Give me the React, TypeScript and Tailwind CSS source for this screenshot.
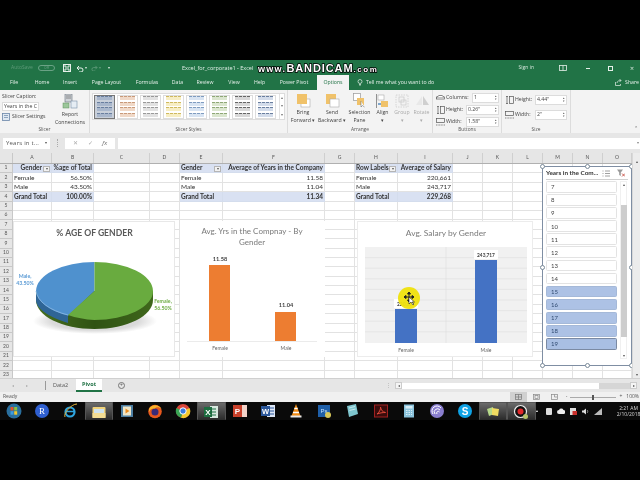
import React from "react";

const COLS = ["A","B","C","D","E","F","G","H","I","J","K","L","M","N","O"];
const cells: Record<string, [string, string?]> = {
  A1:["Gender","r"],B1:["%age of Total","r"],A2:["Female"],B2:["56.50%","r"],A3:["Male"],B3:["43.50%","r"],A4:["Grand Total"],B4:["100.00%","r"],
  E1:["Gender"],F1:["Average of Years in the Company","r"],E2:["Female"],F2:["11.58","r"],E3:["Male"],F3:["11.04","r"],E4:["Grand Total"],F4:["11.34","r"],
  H1:["Row Labels"],I1:["Average of Salary","r"],H2:["Female"],I2:["220,661","r"],H3:["Male"],I3:["243,717","r"],H4:["Grand Total"],I4:["229,268","r"],
};
const FILTER = new Set(["A1","E1","H1"]);
const PIVOT = new Set(["A","B","E","F","H","I"]);
const GRID = "grid grid-cols-[13px_39px_42px_56px_30px_43px_102px_30px_43px_55px_30px_30px_30px_30px_30px_29px]";

function Drop() {
  return (
    <span className="absolute right-[1px] top-[1.5px] flex h-[6px] w-[7px] items-center justify-center border border-[#b5b5b5] bg-[#f2f2f2]">
      <span className="h-0 w-0 border-x-[1.5px] border-t-[2px] border-x-transparent border-t-[#555]" />
    </span>
  );
}

function Sheet() {
  const rows = Array.from({ length: 23 }, (_, i) => i + 1);
  return (
    <div className="relative flex h-[225px] flex-col overflow-hidden bg-white">
      <div className={`${GRID} h-[11px] shrink-0 border-b border-[#b0b0b0] bg-[#e6e6e6] text-[#555]`}>
        <div className="border-r border-[#c8c8c8]" />
        {COLS.map((c) => (
          <div key={c} className="flex items-center justify-center border-r border-[#cfcfcf] text-[5px]">{c}</div>
        ))}
      </div>
      <div className={`${GRID} auto-rows-[9.4px]`}>
        {rows.map((r) => (
          <React.Fragment key={r}>
            <div className="flex items-center justify-center border-b border-r border-[#c8c8c8] bg-[#e6e6e6] text-[5px] text-[#555]">{r}</div>
            {COLS.map((c) => {
              const id = `${c}${r}`;
              const v = cells[id];
              const band = PIVOT.has(c) && (r === 1 || r === 4);
              return (
                <div
                  key={id}
                  className={`relative flex items-center overflow-visible whitespace-nowrap border-b border-r px-[1px] text-[6.5px] text-[#333] ${
                    band ? "border-[#d4dded] bg-[#d9e1f2] font-bold" : "border-[#e2e2e2]"
                  } ${v && v[1] === "r" ? "justify-end" : "justify-start"} ${id === "A1" ? "pr-[9px]" : ""}`}
                >
                  {v ? v[0] : ""}
                  {FILTER.has(id) && <Drop />}
                </div>
              );
            })}
          </React.Fragment>
        ))}
      </div>
      <PieChart />
      <BarChart />
      <SalaryChart />
      <Slicer />
      <div className="absolute left-[398px] top-[134px] h-[22px] w-[22px] rounded-full bg-[#efe20c] opacity-95" />
      <svg className="absolute left-[402px] top-[138px]" width="15" height="15" viewBox="0 0 15 15">
        <path d="M7 1v10M2 6h10M7 1 5.500 3h3zM7 11l-1.500-2h3zM2 6l2-1.500v3zM12 6l-2-1.500v3z" stroke="#222" strokeWidth="1" fill="#222" />
        <path d="M7 6v7l2-2 2 3 1-1-2-2h2.500z" fill="#fff" stroke="#222" strokeWidth=".6" />
      </svg>
    </div>
  );
}

function PieChart() {
  return (
    <div className="absolute left-[13px] top-[68px] h-[136px] w-[162px] border border-[#e8e8e8] bg-white">
      <svg width="162" height="136" viewBox="13 221 162 136" fontFamily="Lato, 'Open Sans', sans-serif">
        <defs>
          <linearGradient id="gs" x1="0" x2="1" y1="0" y2="0">
            <stop offset="0" stopColor="#48701f" />
            <stop offset=".5" stopColor="#2f5213" />
            <stop offset="1" stopColor="#3f671c" />
          </linearGradient>
          <radialGradient id="sh">
            <stop offset=".7" stopColor="#bbb" />
            <stop offset="1" stopColor="#fff" />
          </radialGradient>
        </defs>
        <ellipse cx="94" cy="320" rx="62" ry="13" fill="url(#sh)" opacity=".55" />
        <path d="M35 290v9c0 16 26 29 58.500 29s58.500-13 58.500-29v-9z" fill="url(#gs)" />
        <path d="M35 290v9c0 8 12 17 32 23v-9C47 307 35 298 35 290z" fill="#2f6596" />
        <path d="M35 290a58.500 29 0 0 0 32 24.500l.5 0L93.500 290V261a58.500 29 0 0 0-58.500 29z" fill="#4f91ce" />
        <path d="M93.500 261a58.500 29 0 0 1 0 58 58 29 0 0 1-26.500-5L93.500 290z" fill="#69ab3f" />
        <path d="M35 290a58.500 29 0 0 0 32 24" fill="none" stroke="#8fbbe6" strokeWidth=".8" />
        <text x="93.500" y="235" textAnchor="middle" fontSize="8.600" fontWeight="700" fill="#595959">% AGE OF GENDER</text>
        <text x="24" y="277" textAnchor="middle" fontSize="5.200" fontWeight="700" fill="#5b9bd5">Male,</text>
        <text x="24" y="284" textAnchor="middle" fontSize="5.200" fontWeight="700" fill="#5b9bd5">43.50%</text>
        <text x="162" y="302" textAnchor="middle" fontSize="5.200" fontWeight="700" fill="#70ad47">Female,</text>
        <text x="162" y="309" textAnchor="middle" fontSize="5.200" fontWeight="700" fill="#70ad47">56.50%</text>
      </svg>
    </div>
  );
}

function BarChart() {
  return (
    <div className="absolute left-[180px] top-[68px] h-[136px] w-[145px] bg-white">
      <svg width="145" height="136" viewBox="180 221 145 136" fontFamily="Lato, 'Open Sans', sans-serif">
        <text x="252" y="234" textAnchor="middle" fontSize="8" fill="#7a7a7a">Avg. Yrs in the Compnay - By</text>
        <text x="252" y="245" textAnchor="middle" fontSize="8" fill="#7a7a7a">Gender</text>
        <rect x="209" y="265" width="21" height="76" fill="#ed7d31" />
        <rect x="275" y="312" width="21" height="29" fill="#ed7d31" />
        <path d="M187 341.500h130" stroke="#e2e2e2" strokeWidth=".7" />
        <text x="220" y="261" textAnchor="middle" fontSize="5.600" fontWeight="700" fill="#404040">11.58</text>
        <text x="286" y="307" textAnchor="middle" fontSize="5.600" fontWeight="700" fill="#404040">11.04</text>
        <text x="220" y="350" textAnchor="middle" fontSize="5" fill="#666">Female</text>
        <text x="286" y="350" textAnchor="middle" fontSize="5" fill="#666">Male</text>
      </svg>
    </div>
  );
}

function SalaryChart() {
  const lines = [256.6, 267.2, 277.8, 288.4, 299, 309.6, 320.2, 330.8];
  return (
    <div className="absolute left-[357px] top-[68px] h-[136px] w-[176px] border border-[#ececec] bg-white">
      <svg width="176" height="136" viewBox="357 221 176 136" fontFamily="Lato, 'Open Sans', sans-serif">
        <text x="445" y="235" textAnchor="middle" fontSize="8.400" fill="#7a7a7a">Avg. Salary by Gender</text>
        <rect x="364" y="246" width="162" height="96" fill="#f1f1f1" />
        {lines.map((y) => <path key={y} d={`M364 ${y}h162`} stroke="#dedede" strokeWidth=".6" />)}
        <path d="M445 246v96" stroke="#dedede" strokeWidth=".6" />
        <rect x="394" y="308" width="22" height="34" fill="#4472c4" />
        <rect x="474" y="259" width="22" height="83" fill="#4472c4" />
        <rect x="393" y="298" width="24" height="9" fill="#fff" />
        <rect x="473" y="249" width="24" height="9" fill="#fff" />
        <text x="405" y="304.500" textAnchor="middle" fontSize="4.800" fontWeight="700" fill="#404040">220,661</text>
        <text x="485" y="255.500" textAnchor="middle" fontSize="4.800" fontWeight="700" fill="#404040">243,717</text>
        <text x="405" y="351" textAnchor="middle" fontSize="5" fill="#666">Female</text>
        <text x="485" y="351" textAnchor="middle" fontSize="5" fill="#666">Male</text>
      </svg>
    </div>
  );
}

function Handle({ c }: { c: string }) {
  return <span className={`absolute h-[5px] w-[5px] rounded-full border border-[#7a8a99] bg-white ${c}`} />;
}

function Slicer() {
  const items = [7,8,9,10,11,12,13,14,15,16,17,18,19];
  return (
    <div className="absolute left-[542px] top-[13px] flex h-[200px] w-[90px] flex-col border border-[#7f8ea3] bg-white">
      <Handle c="left-[-3px] top-[-3px]" /><Handle c="left-[42px] top-[-3px]" /><Handle c="right-[-3px] top-[-3px]" />
      <Handle c="left-[-3px] top-[98px]" /><Handle c="right-[-3px] top-[98px]" />
      <Handle c="left-[-3px] bottom-[-3px]" /><Handle c="left-[42px] bottom-[-3px]" /><Handle c="right-[-3px] bottom-[-3px]" />
      <div className="mx-[3px] flex h-[13px] shrink-0 items-center justify-between border-b border-[#d0d0d0] pr-[3px]">
        <span className="whitespace-nowrap text-[6.400px] font-bold text-[#333]">Years in the Com...</span>
        <span className="flex items-center gap-[7px]">
          <svg width="8" height="7" viewBox="0 0 8 7" stroke="#888" strokeWidth=".8"><path d="M3 1h5M3 3.500h5M3 6h5M.5 1h1M.5 3.500h1M.5 6h1" /></svg>
          <svg width="8" height="8" viewBox="0 0 8 8"><path d="M0 .5h6L3.800 3.500V7L2.200 6V3.500z" fill="#999" /><path d="M5 4.500l3 3M8 4.500l-3 3" stroke="#c0392b" strokeWidth=".8" /></svg>
        </span>
      </div>
      <div className="flex flex-1 gap-[3px] pl-[3px] pt-[1px]">
        <div className="flex w-[71px] flex-col gap-[1.5px]">
          {items.map((n) => (
            <div
              key={n}
              className={`flex h-[11.6px] shrink-0 items-center rounded-[1.500px] border pl-[4px] text-[6px] ${
                n === 19 ? "border-[#7b8aa3] bg-[#a9bfe3] text-[#2f4a70]" : n >= 15 ? "border-[#a5b9d8] bg-[#adc2e5] text-[#2f4a70]" : "border-[#e3e3e3] bg-white text-[#444]"
              }`}
            >
              {n}
            </div>
          ))}
        </div>
        <div className="flex h-[178px] w-[7px] flex-col items-center justify-between border border-[#f0f0f0]">
          <span className="mt-[2px] h-0 w-0 border-x-[1.5px] border-b-[2px] border-x-transparent border-b-[#555]" />
          <div className="h-[132px] w-[6px] bg-[#cdcdcd]" />
          <span className="mb-[1px] h-0 w-0 border-x-[1.5px] border-t-[2px] border-x-transparent border-t-[#555]" />
        </div>
      </div>
    </div>
  );
}

function Gallery() {
  const sw = [
    "border-[#6a7f9f] bg-[#a9b7cc]",
    "border-[#c99a7a] bg-[#f0d9c8]",
    "border-[#9a9a9a] bg-[#e2e2e2]",
    "border-[#cfb95f] bg-[#f7eec4]",
    "border-[#7f9cc0] bg-[#d8e4f2]",
    "border-[#8fa877] bg-[#dbe6cf]",
    "border-[#666666] bg-[#d8d8d8]",
    "border-[#6a7f9f] bg-[#d3dcea]",
  ];
  return (
    <div className="mx-[2px] mt-[3px] flex h-[27px] items-center gap-[2.500px] border border-[#dcdcdc] bg-white pl-[1px]">
      {sw.map((cls, i) => (
        <div key={i} className={`flex h-[24px] w-[20.500px] shrink-0 flex-col justify-center gap-[1.500px] border px-[1.500px] ${i === 0 ? "border-[#777] bg-[#c9d0da]" : "border-[#ddd]"}`}>
          {[0,1,2,3].map((k) => (
            <div key={k} className={`h-[4px] border-t border-dashed ${cls}`} />
          ))}
        </div>
      ))}
      <div className="ml-[1px] flex h-full w-[6px] flex-col items-center justify-around border-l border-[#e2e2e2] text-[4px] text-[#777]">
        <span>▴</span><span>▾</span><span>▾</span>
      </div>
    </div>
  );
}

function RibbonBtn({ label, label2, icon, off, w }: { label: string; label2: string; icon: React.ReactNode; off?: boolean; w: string }) {
  return (
    <div className={`flex ${w} flex-col items-center text-center leading-[7.500px] ${off ? "text-[#aaa]" : "text-[#444]"}`}>
      <div className="flex h-[17px] items-center">{icon}</div>
      <span className="whitespace-nowrap">{label}</span>
      <span className="whitespace-nowrap">{label2}</span>
    </div>
  );
}

function Group({ name, w, children }: { name: string; w: string; children: React.ReactNode }) {
  return (
    <div className={`relative ${w} h-full shrink-0 border-r border-[#dcdcdc]`}>
      {children}
      <div className="absolute bottom-[0px] left-0 right-0 text-center text-[4.800px] leading-[7px] text-[#555]">{name}</div>
    </div>
  );
}

function SizeRow({ label, val, icon, w, box }: { label: string; val: string; icon: React.ReactNode; w: string; box: string }) {
  return (
    <div className="flex h-[12px] items-center gap-[1px]">
      <span className="flex w-[9px] justify-center">{icon}</span>
      <span className={`${w} whitespace-nowrap`}>{label}</span>
      <span className={`flex h-[10px] ${box} items-center justify-between border border-[#dcdcdc] bg-white pl-[1px] pr-[1px]`}>
        {val}
        <span className="flex flex-col text-[3px] leading-[3px] text-[#555]"><span>▴</span><span>▾</span></span>
      </span>
    </div>
  );
}

const HIco = <svg width="8" height="8" viewBox="0 0 8 8" stroke="#555" strokeWidth=".7" fill="none"><path d="M1 0v8M.2 1 1 0l.8 1M.2 7l.8 1 .8-1" /><rect x="3.500" y=".5" width="4" height="7" /></svg>;
const WIco = <svg width="9" height="8" viewBox="0 0 9 8" stroke="#555" strokeWidth=".7" fill="none"><rect x=".5" y=".5" width="8" height="4" /><path d="M0 7h9" strokeDasharray="1 .6" /></svg>;
const CIco = <svg width="9" height="7" viewBox="0 0 9 7" stroke="#555" strokeWidth=".7" fill="#fff"><rect x=".5" y="2" width="8" height="2" /><path d="M1 2 3 .5h3L8 2" /></svg>;

function Ribbon() {
  return (
    <div className="flex h-[43px] shrink-0 bg-[#f3f3f3] text-[5.200px] text-[#444]">
      <Group name="Slicer" w="w-[90px]">
        <div className="flex h-full">
          <div className="flex w-[51px] flex-col pl-[2px] pt-[3px]">
            <span className="leading-[7px]">Slicer Caption:</span>
            <span className="mt-[2px] flex h-[9px] w-[37px] items-center whitespace-nowrap border border-[#dcdcdc] bg-white pl-[1px]">Years in the C</span>
            <span className="mt-[2px] flex items-center gap-[2px] whitespace-nowrap">
              <svg width="8" height="8" viewBox="0 0 8 8"><rect x=".5" y=".5" width="7" height="7" fill="#dfe8f2" stroke="#6a86a8" strokeWidth=".8" /><path d="M2 2.500h4M2 4.500h4" stroke="#6a86a8" strokeWidth=".7" /></svg>
              Slicer Settings
            </span>
          </div>
          <div className="flex flex-1 flex-col items-center pt-[4px] text-center leading-[7.500px]">
            <svg width="16" height="15" viewBox="0 0 16 15"><rect x="3" y="0" width="7" height="8" fill="#cfd3d8" stroke="#67707a" strokeWidth=".6" /><path d="M4 2h5M4 4h5" stroke="#555" strokeWidth=".6" /><rect x="1" y="9" width="6" height="5" fill="#9cc79a" stroke="#5e8f5c" strokeWidth=".5" /><rect x="9" y="7" width="6" height="7" fill="#e6edf4" stroke="#7a90a8" strokeWidth=".6" /></svg>
            <span className="mt-[2px]">Report</span>
            <span>Connections</span>
          </div>
        </div>
      </Group>
      <Group name="Slicer Styles" w="w-[198px]"><Gallery /></Group>
      <Group name="Arrange" w="w-[145px]">
        <div className="flex pt-[2px]">
          <RibbonBtn w="w-[30px]" label="Bring" label2="Forward ▾" icon={<svg width="15" height="15" viewBox="0 0 15 15"><rect x="5" y="6" width="9" height="8" fill="#fff" stroke="#aaa" strokeWidth=".6" /><rect x="1" y="1" width="10" height="10" fill="#f0c26a" /></svg>} />
          <RibbonBtn w="w-[28px]" label="Send" label2="Backward ▾" icon={<svg width="15" height="15" viewBox="0 0 15 15"><rect x="1" y="1" width="10" height="10" fill="#f0c26a" /><rect x="5" y="6" width="9" height="8" fill="#fff" stroke="#aaa" strokeWidth=".6" /></svg>} />
          <RibbonBtn w="w-[27px]" label="Selection" label2="Pane" icon={<svg width="14" height="15" viewBox="0 0 14 15"><rect x=".5" y=".5" width="7" height="7" fill="#fff" stroke="#999" strokeWidth=".7" /><rect x="4" y="5" width="7" height="7" fill="#f0c26a" /><path d="M8 8v6l1.500-1.500 2 1.500" fill="#fff" stroke="#555" strokeWidth=".5" /></svg>} />
          <RibbonBtn w="w-[19px]" label="Align" label2="▾" icon={<svg width="13" height="14" viewBox="0 0 13 14"><path d="M.5 0v14" stroke="#777" strokeWidth=".8" /><rect x="2" y="1" width="6" height="5" fill="#fff" stroke="#aaa" strokeWidth=".6" /><rect x="5" y="7" width="7" height="6" fill="#f0c26a" /><path d="M2 10h3" stroke="#2f75b5" strokeWidth="1.200" /></svg>} />
          <RibbonBtn w="w-[20px]" off label="Group" label2="▾" icon={<svg width="14" height="14" viewBox="0 0 14 14" fill="none" stroke="#c8c8c8" strokeWidth=".7"><rect x="1" y="1" width="12" height="12" strokeDasharray="1.500 1" /><rect x="4" y="3" width="5" height="5" /><rect x="6" y="6" width="5" height="5" /></svg>} />
          <RibbonBtn w="w-[19px]" off label="Rotate" label2="▾" icon={<svg width="14" height="13" viewBox="0 0 14 13"><path d="M7 11V2L1 11z" fill="#e8e8e8" /><path d="M8 11V2l6 9z" fill="#cfcfcf" /></svg>} />
        </div>
      </Group>
      <Group name="Buttons" w="w-[69px]">
        <div className="pl-[3px] pt-[2px]">
          <SizeRow label="Columns:" val="1" w="w-[25px]" box="w-[27px]" icon={CIco} />
          <SizeRow label="Height:" val="0.26&quot;" w="w-[19px]" box="w-[33px]" icon={HIco} />
          <SizeRow label="Width:" val="1.58&quot;" w="w-[19px]" box="w-[33px]" icon={WIco} />
        </div>
      </Group>
      <Group name="Size" w="w-[69px]">
        <div className="pl-[3px] pt-[4px]">
          <SizeRow label="Height:" val="4.44&quot;" w="w-[19px]" box="w-[32px]" icon={HIco} />
          <div className="h-[3px]" />
          <SizeRow label="Width:" val="2&quot;" w="w-[19px]" box="w-[32px]" icon={WIco} />
        </div>
      </Group>
      <div className="flex flex-1 items-end justify-end pb-[1px] pr-[2px] text-[5px] text-[#666]">⌃</div>
    </div>
  );
}

function Title() {
  return (
    <div className="relative flex h-[15px] shrink-0 items-center bg-[#217346] pt-[1px] text-[5px] text-[#d5e6dc]">
      <span className="ml-[11px] w-[27px] text-[#5f9a79]">AutoSave</span>
      <span className="flex h-[6px] w-[17px] items-center justify-center rounded-full border border-[#6aa285] text-[3.500px] text-[#6aa285]">Off</span>
      <svg className="ml-[8px]" width="8" height="8" viewBox="0 0 8 8" fill="none" stroke="#e6f0ea" strokeWidth="1"><rect x=".5" y=".5" width="7" height="7" /><path d="M2 .5v2.500h4V.5M2 7.500V5h4v2.500" /></svg>
      <svg className="ml-[5px]" width="8" height="7" viewBox="0 0 8 7" fill="none" stroke="#e6f0ea" strokeWidth="1"><path d="M1 3h4a2 2 0 0 1 0 4H3M3 1 1 3l2 2" /></svg>
      <span className="ml-[1px] text-[3.500px]">▾</span>
      <svg className="ml-[4px]" width="7" height="6" viewBox="0 0 8 7" fill="none" stroke="#5f9a79" strokeWidth="1"><path d="M7 3H3a2 2 0 0 0 0 4h2M5 1l2 2-2 2" /></svg>
      <span className="ml-[1px] text-[3.500px] text-[#5f9a79]">▾</span>
      <span className="ml-[7px] text-[4px]">▾</span>
      <span className="ml-[72px] whitespace-nowrap text-[5.500px] text-[#e2efe8]">Excel_for_corporate1 - Excel</span>
      <span className="ml-auto mr-[25px] whitespace-nowrap">Sign in</span>
      <svg className="mr-[19px]" width="8" height="6" viewBox="0 0 8 6" fill="none" stroke="#e6f0ea" strokeWidth=".8"><rect x=".5" y=".5" width="7" height="5" /><path d="M4 .5v5" /></svg>
      <span className="mr-[18px] h-px w-[4px] bg-[#e6f0ea]" />
      <span className="mr-[17px] h-[5px] w-[5px] border border-[#e6f0ea]" />
      <span className="mr-[6px] text-[7px] leading-none">×</span>
      <span className="absolute left-[258px] top-[0px] whitespace-nowrap font-bold text-white [font-family:'Liberation_Sans',sans-serif] [paint-order:stroke_fill] [-webkit-text-stroke:1.500px_#000]">
        <span className="text-[9px] tracking-[1.300px]">www.</span>
        <span className="text-[11px] tracking-[0.9px]">BANDICAM</span>
        <span className="text-[8px] tracking-[1.600px]">.com</span>
      </span>
    </div>
  );
}

function Tabs() {
  const tabs: [string, string][] = [
    ["File","w-[28px]"],["Home","w-[28px]"],["Insert","w-[28px]"],["Page Layout","w-[45px]"],["Formulas","w-[36px]"],["Data","w-[25px]"],
    ["Review","w-[30px]"],["View","w-[28px]"],["Help","w-[23px]"],["Power Pivot","w-[46px]"],
  ];
  return (
    <div className="flex h-[15px] shrink-0 items-center bg-[#217346] text-[5.200px] text-[#e6f0ea]">
      {tabs.map(([t, w]) => <span key={t} className={`${w} whitespace-nowrap text-center`}>{t}</span>)}
      <span className="flex h-full w-[32px] items-center justify-center bg-[#f3f3f3] text-[#217346]">Options</span>
      <svg className="ml-[8px]" width="6" height="7" viewBox="0 0 6 7" fill="none" stroke="#e6f0ea" strokeWidth=".7"><circle cx="3" cy="2.500" r="2" /><path d="M2 5.500h2M2.500 6.500h1" /></svg>
      <span className="ml-[3px] whitespace-nowrap">Tell me what you want to do</span>
      <svg className="ml-auto mr-[3px]" width="7" height="7" viewBox="0 0 7 7" fill="none" stroke="#e6f0ea" strokeWidth=".7"><path d="M.5 3v3.500h5V5M2 4c0-2 2-2.500 4-2.500M4.500 0 6 1.500 4.500 3" /></svg>
      <span className="mr-[1px]">Share</span>
    </div>
  );
}

function Formula() {
  return (
    <div className="flex h-[20px] shrink-0 items-center bg-[#e6e6e6] pb-[3px] pt-[3px] text-[6px] text-[#555]">
      <span className="ml-[3px] flex h-[11px] w-[47px] items-center justify-between bg-white px-[3px] tracking-[0.2px]">Years in t...<span className="text-[4px]">▾</span></span>
      <span className="mx-[7px] h-[8px] border-l border-dotted border-[#aaa]" />
      <span className="flex h-[11px] w-[50px] items-center justify-around bg-white px-[3px] text-[#aaa]">
        <span>✕</span><span>✓</span><span className="italic text-[#666]">fx</span>
      </span>
      <span className="ml-[3px] flex h-[11px] flex-1 items-center justify-end bg-white pr-[1px] text-[4px] text-[#888]">▾</span>
    </div>
  );
}

function Bottom() {
  return (
    <>
      <div className="flex h-[14px] shrink-0 items-center border-t border-[#d0d0d0] bg-[#e6e6e6] text-[5.500px] text-[#555]">
        <span className="ml-[12px] text-[4px] text-[#aaa]">◂</span>
        <span className="ml-[12px] text-[4px] text-[#aaa]">▸</span>
        <span className="ml-[17px] h-[9px] border-l border-[#999]" />
        <span className="ml-[7px] w-[23px]">Data2</span>
        <span className="flex h-full w-[26px] items-center justify-center border-b-2 border-[#217346] bg-white font-bold text-[#217346]">Pivot</span>
        <span className="ml-[16px] flex h-[7px] w-[7px] items-center justify-center rounded-full border border-[#777] text-[5px] leading-none">+</span>
        <span className="ml-[261px] text-[5px] text-[#aaa]">⋮</span>
        <span className="ml-[4px] flex h-[7px] w-[7px] items-center justify-center border border-[#ccc] bg-[#f5f5f5] text-[4px]">◂</span>
        <span className="h-[6px] w-[197px] bg-white" />
        <span className="h-[6px] w-[31px] bg-[#d6d6d6]" />
        <span className="flex h-[7px] w-[7px] items-center justify-center border border-[#ccc] bg-[#f5f5f5] text-[4px]">▸</span>
      </div>
      <div className="flex h-[10px] shrink-0 items-center bg-[#f0f0f0] text-[5px] text-[#555]">
        <span className="ml-[3px]">Ready</span>
        <span className="ml-auto mr-[6px] flex h-full w-[17px] items-center justify-center bg-[#d0d0d0]"><svg width="7" height="6" viewBox="0 0 7 6" fill="none" stroke="#777" strokeWidth=".7"><rect x=".5" y=".5" width="6" height="5" /><path d="M3.500.5v5M.5 3h6" /></svg></span>
        <svg className="mr-[11px]" width="7" height="6" viewBox="0 0 7 6" fill="none" stroke="#888" strokeWidth=".7"><rect x=".5" y=".5" width="6" height="5" /><rect x="2" y="1.500" width="3" height="3" /></svg>
        <svg className="mr-[8px]" width="7" height="6" viewBox="0 0 7 6" fill="none" stroke="#888" strokeWidth=".7"><rect x=".5" y=".5" width="6" height="5" /><path d="M3.500.5v2.500H6" /></svg>
        <span className="mr-[3px]">-</span>
        <span className="relative mr-[3px] h-px w-[46px] bg-[#aaa]"><span className="absolute left-[22px] top-[-2px] h-[5px] w-[2px] bg-[#555]" /></span>
        <span className="mr-[4px]">+</span>
        <span className="mr-[1px]">100%</span>
      </div>
    </>
  );
}

function TI({ children, active }: { children: React.ReactNode; active?: boolean }) {
  return (
    <div className={`flex h-[18px] w-[28.200px] shrink-0 items-center justify-center ${active ? "rounded-[1px] border-x border-t border-[#555] bg-gradient-to-b from-[#6b6b6b] to-[#2a2a2a]" : ""}`}>
      <svg width="16" height="16" viewBox="0 0 16 16">{children}</svg>
    </div>
  );
}

function Taskbar() {
  return (
    <div className="flex h-[18px] shrink-0 items-center bg-[#0a0a0a] text-white">
      <TI><circle cx="8" cy="8" r="7.500" fill="#2a6f9e" /><rect x="4.500" y="4" width="3" height="3.500" fill="#e2572b" /><rect x="8.200" y="4" width="3" height="3.500" fill="#8ac33e" /><rect x="4.500" y="8.200" width="3" height="3.500" fill="#3f9de0" /><rect x="8.200" y="8.200" width="3" height="3.500" fill="#f2c92e" /></TI>
      <TI><circle cx="8" cy="8" r="7" fill="#2f5fd0" /><text x="8" y="11" textAnchor="middle" fontSize="9" fill="#fff" fontFamily="'Liberation Serif', serif">R</text></TI>
      <TI><circle cx="8" cy="9" r="4.500" fill="none" stroke="#2fa6e0" strokeWidth="2.200" /><path d="M4 8.500h8" stroke="#2fa6e0" strokeWidth="1.500" /><path d="M3 14C1 11 9 1 15 1" fill="none" stroke="#e5b53a" strokeWidth="1" /></TI>
      <TI active><rect x="1.500" y="3" width="13" height="11" rx="1" fill="#efd27a" /><rect x="3" y="5" width="10" height="5" fill="#cfe3ef" /><rect x="1.500" y="9" width="13" height="5" fill="#f3dd94" /></TI>
      <TI><rect x="2" y="2" width="12" height="12" fill="#4d7fa3" /><rect x="4" y="3.500" width="8" height="9" fill="#f0e6c8" /><path d="M6.500 5.500v5l4-2.500z" fill="#e98a1e" /></TI>
      <TI><circle cx="8" cy="8.500" r="6.800" fill="#e8581e" /><circle cx="8" cy="9" r="3.500" fill="#3a2a78" /><path d="M2 6C4 1 12 1 14.500 6 12 3.500 9 4 8 5.500 6 5 3 6 2 9z" fill="#f7b52a" /></TI>
      <TI><circle cx="8" cy="8" r="7" fill="#d9453a" /><path d="M8 8 14.500 5A7 7 0 0 1 6 14.800z" fill="#f5c92e" /><path d="M8 8 6 14.800A7 7 0 0 1 1.500 5z" fill="#3aa655" /><circle cx="8" cy="8" r="3.200" fill="#3c7ee0" stroke="#fff" strokeWidth="1" /></TI>
      <TI active><rect x="7" y="2" width="8" height="12" fill="#d8e8df" /><path d="M9 5h4M9 8h4M9 11h4" stroke="#217346" strokeWidth="1" /><rect x="1" y="3" width="8" height="10" fill="#1d6d40" /><text x="5" y="11" textAnchor="middle" fontSize="8" fontWeight="700" fill="#fff" fontFamily="'Liberation Sans', sans-serif">X</text></TI>
      <TI><rect x="7" y="2" width="8" height="12" fill="#f3d3c9" /><rect x="1" y="2" width="9" height="12" fill="#c8402a" /><text x="5.500" y="11" textAnchor="middle" fontSize="8" fontWeight="700" fill="#fff" fontFamily="'Liberation Sans', sans-serif">P</text></TI>
      <TI><rect x="7" y="2" width="8" height="12" fill="#dce6f5" /><path d="M10 5h4M10 8h4M10 11h4" stroke="#2b579a" strokeWidth="1" /><rect x="1" y="3" width="9" height="10" fill="#2b579a" /><text x="5.500" y="11" textAnchor="middle" fontSize="7.500" fontWeight="700" fill="#fff" fontFamily="'Liberation Sans', sans-serif">W</text></TI>
      <TI><path d="M8 1 12.500 13h-9z" fill="#f08a12" /><path d="M6.300 5.500h3.400M5 9.500h6" stroke="#fff" strokeWidth="1.300" /><rect x="2.500" y="12.500" width="11" height="2" fill="#e8e8e8" /></TI>
      <TI><rect x="2" y="2" width="12" height="12" fill="#1f5fa8" /><text x="8" y="10" textAnchor="middle" fontSize="6" fill="#bfe0ff" fontFamily="'Liberation Sans', sans-serif">Ps</text><circle cx="12" cy="12" r="3" fill="#d8c85a" /></TI>
      <TI><path d="M3 3 12 1l2 10-9 3z" fill="#7fc6cf" /><path d="M5 5l6-1.500M5.500 7.500l6-1.500" stroke="#e6f5f7" strokeWidth=".7" /></TI>
      <TI><rect x="1.500" y="2" width="13" height="12" fill="#3a0c0c" stroke="#a02020" strokeWidth="1" /><path d="M4 11c2-1 4-5 3.500-7 .5 3 2 5 5 5.500-3 0-6 .5-8.500 1.500z" fill="none" stroke="#e04a3a" strokeWidth="1" /></TI>
      <TI><rect x="3" y="1.500" width="10" height="13" fill="#8cc4dc" /><rect x="4.500" y="3" width="7" height="2.500" fill="#d9eef7" /><path d="M5 7.500h6M5 9.500h6M5 11.500h6" stroke="#d9eef7" strokeWidth="1" strokeDasharray="1.500 1" /></TI>
      <TI><circle cx="8" cy="8" r="7" fill="#8b7fd0" /><path d="M4 11a5 5 0 0 1 8-6M6 11a3 3 0 0 1 5-4M8 11a1.500 1.500 0 0 1 2.500-2" fill="none" stroke="#fff" strokeWidth="1" /></TI>
      <TI><circle cx="8" cy="8" r="7" fill="#0fa3e6" /><text x="8" y="11.500" textAnchor="middle" fontSize="10" fontWeight="700" fill="#fff" fontFamily="'Liberation Sans', sans-serif">S</text></TI>
      <TI active><path d="M2 5 8 3l1 7-5 2z" fill="#b6d98a" /><path d="M7 4l7 1-1 7-6-1z" fill="#f0dc62" /></TI>
      <TI active><circle cx="7.500" cy="7.500" r="6" fill="#111" stroke="#eee" strokeWidth="1.200" /><circle cx="7.500" cy="7.500" r="3" fill="#e0282a" /><circle cx="12.500" cy="12.500" r="2.500" fill="#b9c46a" /></TI>
      <div className="ml-auto flex items-center gap-[5px] pr-[1px]">
        <span className="h-0 w-0 border-x-[1.500px] border-b-[2.500px] border-x-transparent border-b-white" />
        <span className="ml-[3px] h-[7px] w-[6px] rounded-[1px] bg-[#ddd]" />
        <svg width="8" height="6" viewBox="0 0 8 6"><path d="M2 6a2 2 0 0 1 0-4 2.500 2.500 0 0 1 4.500 0A2 2 0 0 1 6 6z" fill="#eee" /></svg>
        <svg width="7" height="7" viewBox="0 0 7 7"><rect width="6" height="7" fill="#ddd" /><rect x="2.500" y="3" width="4.500" height="4" fill="#c9302c" /></svg>
        <svg width="7" height="7" viewBox="0 0 7 7" fill="#ddd"><path d="M0 2.500h1.500L4 .5v6L1.500 4.500H0z" /><path d="M5 2c1 .8 1 2.200 0 3" stroke="#ddd" strokeWidth=".6" fill="none" /></svg>
        <svg width="8" height="7" viewBox="0 0 8 7" fill="#bbb"><path d="M0 7 8 0v7z" /></svg>
        <span className="ml-[3px] flex w-[38px] flex-col items-center text-[5px] leading-[6px] text-[#d8d8d8]">
          <span>2:21 AM</span><span>2/10/2018</span>
        </span>
      </div>
    </div>
  );
}

export default function App() {
  return (
    <div className="flex h-[480px] w-[640px] flex-col overflow-hidden bg-black blur-[0.3px] [font-family:'Open_Sans','Noto_Sans',sans-serif]">
      <div className="h-[60px] shrink-0" />
      <Title />
      <Tabs />
      <Ribbon />
      <Formula />
      <div className="flex shrink-0">
        <div className="w-[632px] [font-family:Lato,'Open_Sans',sans-serif]"><Sheet /></div>
        <div className="flex h-[225px] w-[8px] flex-col items-center justify-between border-l border-[#d8d8d8] bg-[#ececec] text-[4px] text-[#555]">
          <span className="mt-[6px]">▴</span>
          <span>▾</span>
        </div>
      </div>
      <Bottom />
      <Taskbar />
    </div>
  );
}
